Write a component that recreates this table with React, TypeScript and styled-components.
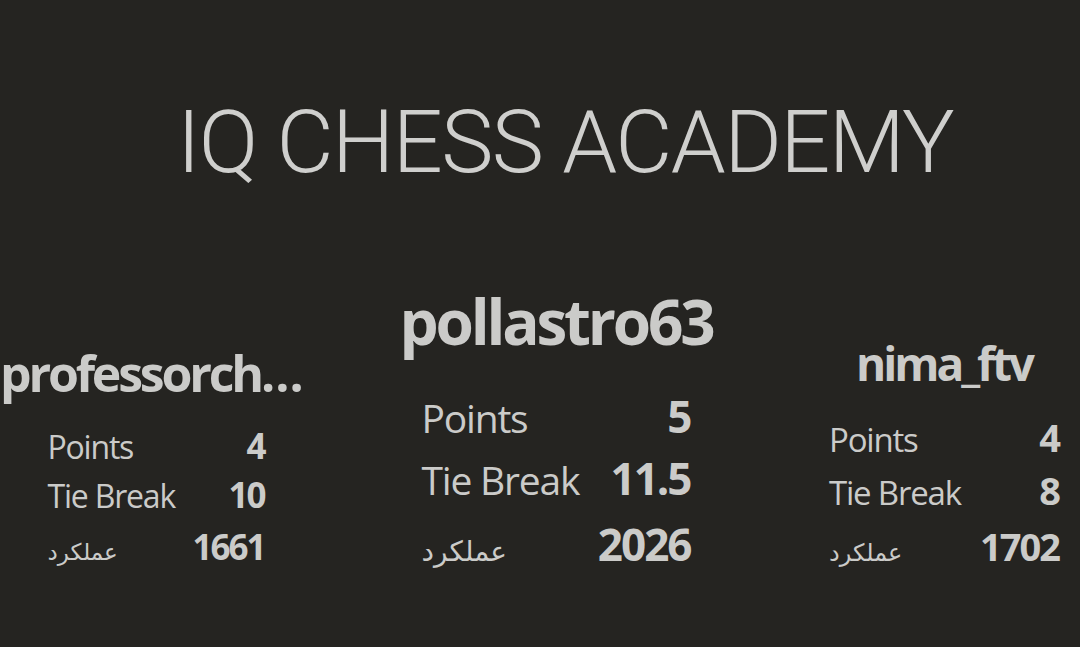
import React from 'react';
import styled, { createGlobalStyle, css } from 'styled-components';

type Size = {
    width: number;
    offset: number;
    drop: number;
    nameSize: number;
    nameSpacing: number;
    nameMax?: number;
    labelSize: number;
    valueSize: number;
    rowHeight: number;
    statsTop: number;
    statsWidth: number;
};

type Player = {
    name: string;
    points: string;
    tieBreak: string;
    rating: string;
    size: Size;
};

const players: Player[] = [
    {
        name: 'professorchess2020',
        points: '4',
        tieBreak: '10',
        rating: '1661',
        size: {
            width: 312, offset: 0, drop: 60, nameSize: 50, nameSpacing: -3.2, nameMax: 312,
            labelSize: 32, valueSize: 35, rowHeight: 48, statsTop: 16, statsWidth: 217,
        },
    },
    {
        name: 'pollastro63',
        points: '5',
        tieBreak: '11.5',
        rating: '2026',
        size: {
            width: 312, offset: 88, drop: 0, nameSize: 62, nameSpacing: -3.2,
            labelSize: 39, valueSize: 44, rowHeight: 60, statsTop: 24, statsWidth: 269,
        },
    },
    {
        name: 'nima_ftv',
        points: '4',
        tieBreak: '8',
        rating: '1702',
        size: {
            width: 232, offset: 116, drop: 53, nameSize: 46, nameSpacing: -3,
            labelSize: 33, valueSize: 38, rowHeight: 51, statsTop: 18, statsWidth: 230,
        },
    },
];

const GlobalStyle = createGlobalStyle`
    html, body {
        margin: 0;
        padding: 0;
        background-color: #252421;
    }
    body {
        font-family: 'Open Sans', 'DejaVu Sans', sans-serif;
        color: #cbcbc9;
    }
`;

const Page = styled.div`
    width: 1080px;
    height: 647px;
    overflow: hidden;
    background-color: #252421;
`;

const Title = styled.h1`
    margin: 0;
    padding-top: 98px;
    padding-left: 50px;
    text-align: center;
    font-family: Roboto, 'Liberation Sans', sans-serif;
    font-weight: 300;
    font-size: 88px;
    line-height: 88px;
    letter-spacing: -1.6px;
    color: #cfcfcd;
`;

const Podium = styled.div`
    display: flex;
    align-items: flex-start;
    margin-top: 95px;
`;

const Column = styled.div<{ $s: Size }>`
    display: flex;
    flex-direction: column;
    align-items: center;
    flex-shrink: 0;
    width: ${(p) => p.$s.width}px;
    margin-left: ${(p) => p.$s.offset}px;
    padding-top: ${(p) => p.$s.drop}px;
`;

const Name = styled.div<{ $s: Size }>`
    font-weight: 700;
    font-size: ${(p) => p.$s.nameSize}px;
    line-height: 1.3;
    letter-spacing: ${(p) => p.$s.nameSpacing}px;
    white-space: nowrap;

    ${(p) =>
        p.$s.nameMax &&
        css`
            max-width: ${p.$s.nameMax}px;
            overflow: hidden;
            text-overflow: ellipsis;
        `}
`;

const Stats = styled.div<{ $s: Size }>`
    display: flex;
    flex-direction: column;
    width: ${(p) => p.$s.statsWidth}px;
    margin-top: ${(p) => p.$s.statsTop}px;
`;

const Row = styled.div<{ $s: Size }>`
    display: flex;
    justify-content: space-between;
    align-items: baseline;
    line-height: ${(p) => p.$s.rowHeight}px;

    &:last-child {
        margin-top: ${(p) => Math.round(p.$s.rowHeight * 0.06)}px;
    }
`;

const Label = styled.span<{ $s: Size }>`
    font-size: ${(p) => p.$s.labelSize}px;
    letter-spacing: -1.2px;
`;

const Persian = styled.span<{ $s: Size }>`
    font-family: 'DejaVu Sans', 'Noto Sans', sans-serif;
    font-size: ${(p) => Math.round(p.$s.labelSize * 0.72)}px;
`;

const Value = styled.span<{ $s: Size }>`
    font-weight: 700;
    font-size: ${(p) => p.$s.valueSize}px;
    letter-spacing: -2px;
`;

const PlayerCard = ({ player }: { player: Player }) => {
    const s = player.size;
    return (
        <Column $s={s}>
            <Name $s={s}>{player.name}</Name>
            <Stats $s={s}>
                <Row $s={s}>
                    <Label $s={s}>Points</Label>
                    <Value $s={s}>{player.points}</Value>
                </Row>
                <Row $s={s}>
                    <Label $s={s}>Tie Break</Label>
                    <Value $s={s}>{player.tieBreak}</Value>
                </Row>
                <Row $s={s}>
                    <Persian $s={s} dir="rtl" lang="fa">عملکرد</Persian>
                    <Value $s={s}>{player.rating}</Value>
                </Row>
            </Stats>
        </Column>
    );
};

const App = () => {
    return (
        <Page>
            <GlobalStyle />
            <Title>IQ CHESS ACADEMY</Title>
            <Podium>
                {players.map((p) => (
                    <PlayerCard key={p.name} player={p} />
                ))}
            </Podium>
        </Page>
    );
};

export default App;
